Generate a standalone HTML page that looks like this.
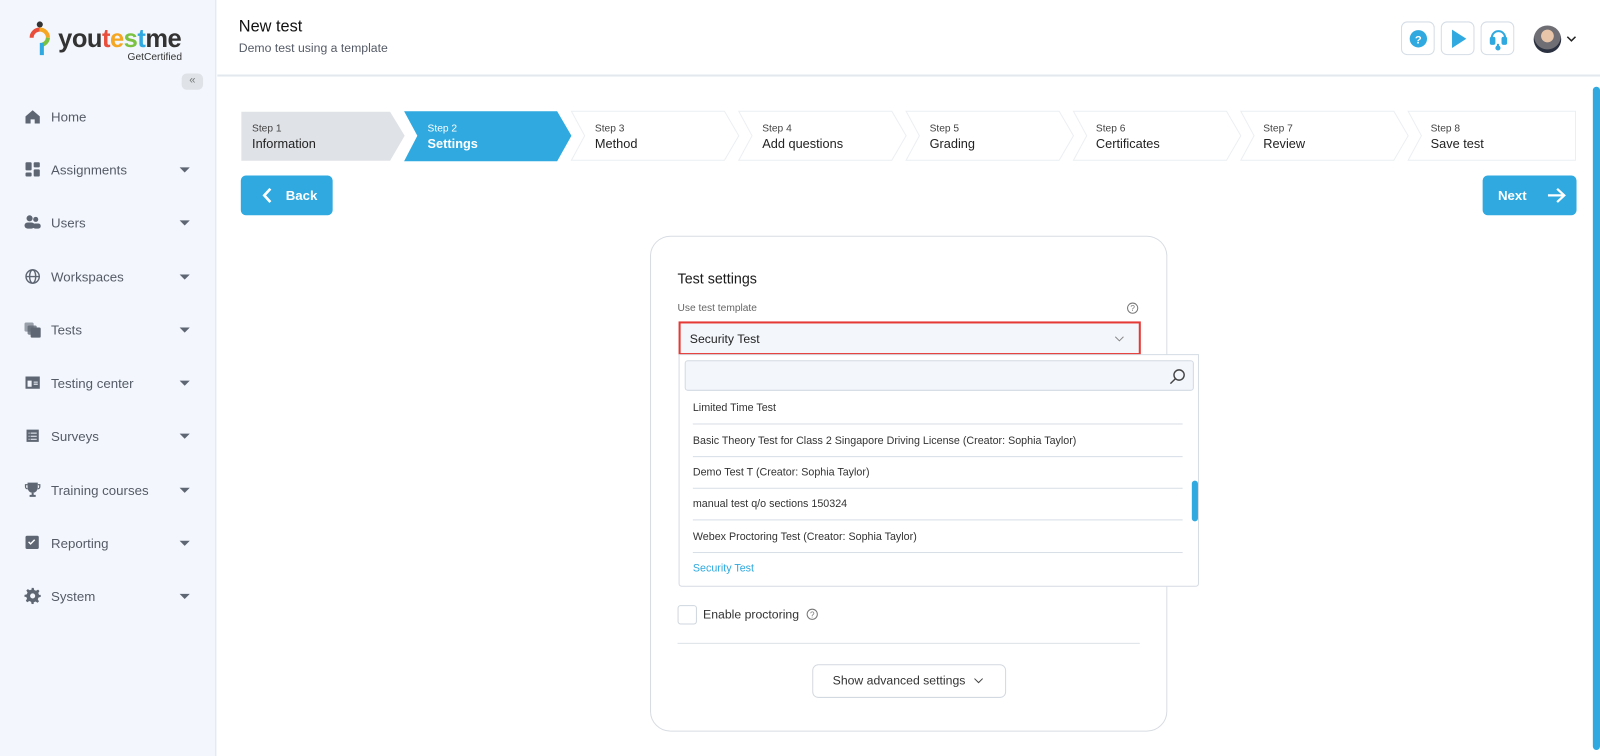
<!DOCTYPE html>
<html><head><meta charset="utf-8"><style>
*{box-sizing:border-box;margin:0;padding:0}
body{width:1600px;height:756px;overflow:hidden;font-family:"Liberation Sans",Arial,sans-serif;background:#fff;position:relative;color:#222}
#w{position:absolute;left:0;top:0;width:1568px;height:741px;transform:scale(1.0204);transform-origin:0 0}
#w div,#w span{white-space:nowrap}
.side{position:absolute;left:0;top:0;width:212px;height:741px;background:#f3f7fd;border-right:1px solid #dfe5ee}
.nav{position:absolute;left:24px;font-size:13px;color:#555b66;display:flex;align-items:center;width:164px}
.nav svg{width:16px;height:16px;margin-right:10px;fill:#5e6673}
.nav .car{position:absolute;right:2px;top:6px;width:0;height:0;border-left:5px solid transparent;border-right:5px solid transparent;border-top:5px solid #5e6673}
.hdr{position:absolute;left:213px;top:0;right:0;height:75px;border-bottom:2px solid #e3e8ef}
.abs{position:absolute}
.ib{position:absolute;top:21px;width:33px;height:33px;border:1px solid #d5dde6;border-radius:6px;background:#fff}
.step{position:absolute;top:109px;height:49px;width:150px}
.step .t{position:absolute;left:10px;top:12px;font-size:10px;color:#444}
.step .n{position:absolute;left:10px;top:25px;font-size:12.5px;color:#222}
.btn{position:absolute;background:#2fa9df;border-radius:5px;color:#fff;font-weight:bold;font-size:13px}
.card{position:absolute;left:637px;top:231px;width:507px;height:486px;border:1px solid #d8dde3;border-radius:20px}
.dd{position:absolute;left:665px;top:347px;width:510px;height:228px;border:1px solid #d5dce4;background:#fff;border-radius:0 0 3px 3px}
.it{position:absolute;left:13px;width:480px;font-size:10.5px;color:#333;height:31px;line-height:31px;border-bottom:1px solid #d8dee6}
</style></head><body><div id="w">
<div class="side">
 <svg class="abs" style="left:28px;top:20px" width="22" height="36" viewBox="0 0 22 36"><circle cx="11" cy="4" r="3" fill="#333"/><path d="M3 17a8 8 0 0 1 8-8" stroke="#e94e3c" stroke-width="4" fill="none"/><path d="M11 9a8 8 0 0 1 8 8" stroke="#f5a623" stroke-width="4" fill="none"/><path d="M19 17a8 8 0 0 1-6 7" stroke="#7cc242" stroke-width="4" fill="none"/><path d="M13 22v12" stroke="#2fa9df" stroke-width="4"/></svg>
 <div class="abs" style="left:57px;top:24px;font-size:25px;font-weight:bold;letter-spacing:-0.5px;color:#333">you<span style="color:#e94e3c">t</span><span style="color:#f5a623">e</span><span style="color:#7cc242">s</span><span style="color:#2fa9df">t</span>me</div>
 <div class="abs" style="left:125px;top:51px;font-size:10px;color:#333">GetCertified</div>
 <div class="abs" style="left:178px;top:72px;width:21px;height:16px;border-radius:5px;background:#dfe3e8;font-size:11px;color:#777;text-align:center;line-height:15px">«</div>
 <div class="nav" style="top:106px"><svg viewBox="0 0 16 16"><path d="M1 8L8 2l7 6v7h-5v-4H6v4H1z"/></svg>Home</div>
 <div class="nav" style="top:158px"><svg viewBox="0 0 16 16"><rect x="1" y="1" width="6" height="8" rx="1"/><rect x="9" y="1" width="6" height="5" rx="1"/><rect x="1" y="11" width="6" height="4" rx="1"/><rect x="9" y="8" width="6" height="7" rx="1"/></svg>Assignments<i class="car"></i></div>
 <div class="nav" style="top:210px"><svg viewBox="0 0 16 16"><circle cx="5" cy="4" r="3"/><circle cx="11" cy="5" r="2.5"/><rect x="0" y="8" width="10" height="6" rx="3"/><rect x="8" y="9" width="8" height="5" rx="2.5"/></svg>Users<i class="car"></i></div>
 <div class="nav" style="top:263px"><svg viewBox="0 0 16 16" fill="none" stroke="#5e6673" stroke-width="1.4"><circle cx="8" cy="8" r="6.5" fill="none"/><ellipse cx="8" cy="8" rx="3" ry="6.5" fill="none"/><path d="M1.5 8h13" /></svg>Workspaces<i class="car"></i></div>
 <div class="nav" style="top:315px"><svg viewBox="0 0 16 16"><rect x="0" y="1" width="9" height="9" rx="1.5" opacity=".6"/><rect x="3" y="4" width="9" height="9" rx="1.5" opacity=".8"/><rect x="6" y="6" width="10" height="10" rx="1.5"/></svg>Tests<i class="car"></i></div>
 <div class="nav" style="top:367px"><svg viewBox="0 0 16 16"><path d="M1 2h14v12H1z M3 6v6h4V6z M9 7h4v1H9z M9 9h4v1H9z" fill-rule="evenodd"/></svg>Testing center<i class="car"></i></div>
 <div class="nav" style="top:419px"><svg viewBox="0 0 16 16"><path d="M2 2h12v12H2z M4 5h1v1H4z M6 5h6v1H6z M4 8h1v1H4z M6 8h6v1H6z M4 11h1v1H4z M6 11h6v1H6z" fill-rule="evenodd"/></svg>Surveys<i class="car"></i></div>
 <div class="nav" style="top:472px"><svg viewBox="0 0 16 16"><path d="M3 1h10v5a5 5 0 0 1-10 0z M7 11h2v2h2v2H5v-2h2z"/><path d="M3 3H1v2a2 2 0 0 0 2 2M13 3h2v2a2 2 0 0 1-2 2" stroke="#5e6673" fill="none" stroke-width="1.2"/></svg>Training courses<i class="car"></i></div>
 <div class="nav" style="top:524px"><svg viewBox="0 0 16 16"><rect x="1" y="1" width="13" height="13" rx="1.5"/><path d="M4 7l2 2 4-4" stroke="#fff" stroke-width="1.4" fill="none"/></svg>Reporting<i class="car"></i></div>
 <div class="nav" style="top:576px"><svg viewBox="0 0 16 16"><path d="M7 0h2l.5 2.2 1.8.8 2-1.2 1.4 1.4-1.2 2 .8 1.8L16 7v2l-2.2.5-.8 1.8 1.2 2-1.4 1.4-2-1.2-1.8.8L9 16H7l-.5-2.2-1.8-.8-2 1.2-1.4-1.4 1.2-2-.8-1.8L0 9V7l2.2-.5.8-1.8-1.2-2 1.4-1.4 2 1.2 1.8-.8z M8 5.5a2.5 2.5 0 1 0 0 5 2.5 2.5 0 0 0 0-5z" fill-rule="evenodd"/></svg>System<i class="car"></i></div>
</div>
<div class="hdr">
 <div class="abs" style="left:21px;top:18px;font-size:16px;color:#111">New test</div>
 <div class="abs" style="left:21px;top:40px;font-size:12px;color:#555b66">Demo test using a template</div>
 <div class="ib" style="left:1160px"><svg width="33" height="33"><circle cx="16" cy="16" r="8.5" fill="#2fa9df"/><text x="16" y="20.5" font-size="11" font-weight="bold" fill="#fff" text-anchor="middle" font-family="Liberation Sans">?</text></svg></div>
 <div class="ib" style="left:1199px"><svg width="33" height="33"><path d="M10 7l14 9-14 9z" fill="#2fa9df"/></svg></div>
 <div class="ib" style="left:1238px"><svg width="33" height="33" fill="none" stroke="#2fa9df" stroke-width="2"><path d="M10 18v-3a6.5 6.5 0 0 1 13 0v3"/><rect x="9" y="15" width="3.5" height="6" rx="1" fill="#2fa9df"/><rect x="20.5" y="15" width="3.5" height="6" rx="1" fill="#2fa9df"/><path d="M16 21v3"/><circle cx="16" cy="25" r="1.5" fill="#2fa9df"/></svg></div>
 <div class="abs" style="left:1290px;top:25px;width:27px;height:27px;border-radius:50%;background:radial-gradient(circle at 50% 38%,#e8c4a8 0 28%,#6e6e74 30% 60%,#2b3140 62%)"></div>
 <svg class="abs" style="left:1322px;top:35px" width="10" height="7"><path d="M1 1l4 4 4-4" stroke="#222" stroke-width="1.5" fill="none"/></svg>
</div>
<div class="abs" style="left:1561px;top:85px;width:7px;height:650px;border-radius:4px;background:#2fa9df"></div>
<svg class="abs" style="left:236px;top:108px" width="1310" height="51">
 <g stroke-width="1">
 <polygon points="1,2 146,2 160,25 146,49 1,49" fill="#dfe2e6" stroke="#dfe2e6"/>
 <polygon points="160,1 310,1 324,25 310,50 160,50 173,25" fill="#2fa9df"/>
 <polygon points="324,1 474,1 488,25 474,49 324,49 337,25" fill="#fff" stroke="#eceff2"/>
 <polygon points="488,1 638,1 652,25 638,49 488,49 501,25" fill="#fff" stroke="#eceff2"/>
 <polygon points="652,1 802,1 816,25 802,49 652,49 665,25" fill="#fff" stroke="#eceff2"/>
 <polygon points="816,1 966,1 980,25 966,49 816,49 829,25" fill="#fff" stroke="#eceff2"/>
 <polygon points="980,1 1130,1 1144,25 1130,49 980,49 993,25" fill="#fff" stroke="#eceff2"/>
 <polygon points="1144,1 1308,1 1308,49 1144,49 1157,25" fill="#fff" stroke="#eceff2"/>
 </g>
</svg>
<div class="step" style="left:237px"><div class="t">Step 1</div><div class="n">Information</div></div>
<div class="step" style="left:409px"><div class="t" style="color:#fff">Step 2</div><div class="n" style="color:#fff;font-weight:bold">Settings</div></div>
<div class="step" style="left:573px"><div class="t">Step 3</div><div class="n">Method</div></div>
<div class="step" style="left:737px"><div class="t">Step 4</div><div class="n">Add questions</div></div>
<div class="step" style="left:901px"><div class="t">Step 5</div><div class="n">Grading</div></div>
<div class="step" style="left:1064px"><div class="t">Step 6</div><div class="n">Certificates</div></div>
<div class="step" style="left:1228px"><div class="t">Step 7</div><div class="n">Review</div></div>
<div class="step" style="left:1392px"><div class="t">Step 8</div><div class="n">Save test</div></div>
<div class="btn" style="left:236px;top:172px;width:90px;height:39px"><svg class="abs" style="left:20px;top:11px" width="12" height="17"><path d="M9 2L3 8.5 9 15" stroke="#fff" stroke-width="2.6" fill="none"/></svg><span class="abs" style="left:44px;top:12px">Back</span></div>
<div class="btn" style="left:1453px;top:172px;width:92px;height:39px"><span class="abs" style="left:15px;top:12px">Next</span><svg class="abs" style="left:63px;top:11px" width="20" height="17"><path d="M1 8.5h16M10 2l7 6.5-7 6.5" stroke="#fff" stroke-width="2.2" fill="none"/></svg></div>
<div class="card">
 <div class="abs" style="left:26px;top:33px;font-size:14px;color:#1a1a1a">Test settings</div>
 <div class="abs" style="left:26px;top:65px;font-size:10px;color:#666">Use test template</div>
 <svg class="abs" style="left:466px;top:64px" width="12" height="12"><circle cx="6" cy="6" r="5" stroke="#777" fill="none"/><text x="6" y="9" font-size="8" fill="#777" text-anchor="middle" font-family="Liberation Sans">?</text></svg>
 <div class="abs" style="left:27px;top:83px;width:453px;height:33px;border:2px solid #e53935;background:#f3f6fb"><span class="abs" style="left:9px;top:8px;font-size:12px;color:#222">Security Test</span><svg class="abs" style="left:425px;top:12px" width="10" height="7"><path d="M1 1l4 4 4-4" stroke="#888" fill="none"/></svg></div>
 <div class="abs" style="left:26px;top:361px;width:19px;height:19px;border:1px solid #cfd6de;border-radius:3px"></div>
 <div class="abs" style="left:51px;top:363px;font-size:12px;color:#333">Enable proctoring</div>
 <svg class="abs" style="left:152px;top:364px" width="12" height="12"><circle cx="6" cy="6" r="5" stroke="#777" fill="none"/><text x="6" y="9" font-size="8" fill="#777" text-anchor="middle" font-family="Liberation Sans">?</text></svg>
 <div class="abs" style="left:26px;top:398px;width:453px;height:1px;background:#dde2e8"></div>
 <div class="abs" style="left:158px;top:419px;width:190px;height:33px;border:1px solid #d3d9e0;border-radius:6px;font-size:12px;color:#333"><span class="abs" style="left:19px;top:8px">Show advanced settings</span><svg class="abs" style="left:157px;top:12px" width="10" height="7"><path d="M1 1l4 4 4-4" stroke="#444" fill="none"/></svg></div>
</div>
<div class="dd">
 <div class="abs" style="left:5px;top:5px;width:499px;height:30px;border:1px solid #d3dae3;border-radius:3px;background:#f3f6fb"><svg class="abs" style="left:474px;top:7px" width="16" height="16" fill="none" stroke="#444" stroke-width="1.4"><circle cx="9.5" cy="6.5" r="5"/><path d="M6 10l-5 5"/></svg></div>
 <div class="it" style="top:37px">Limited Time Test</div>
 <div class="it" style="top:69px">Basic Theory Test for Class 2 Singapore Driving License (Creator: Sophia Taylor)</div>
 <div class="it" style="top:100px">Demo Test T (Creator: Sophia Taylor)</div>
 <div class="it" style="top:131px">manual test q/o sections 150324</div>
 <div class="it" style="top:163px">Webex Proctoring Test (Creator: Sophia Taylor)</div>
 <div class="it" style="top:194px;border:none;color:#2fa9df">Security Test</div>
 <div class="abs" style="left:502px;top:123px;width:6px;height:40px;border-radius:3px;background:#2fa9df"></div>
</div>
</div></body></html>
